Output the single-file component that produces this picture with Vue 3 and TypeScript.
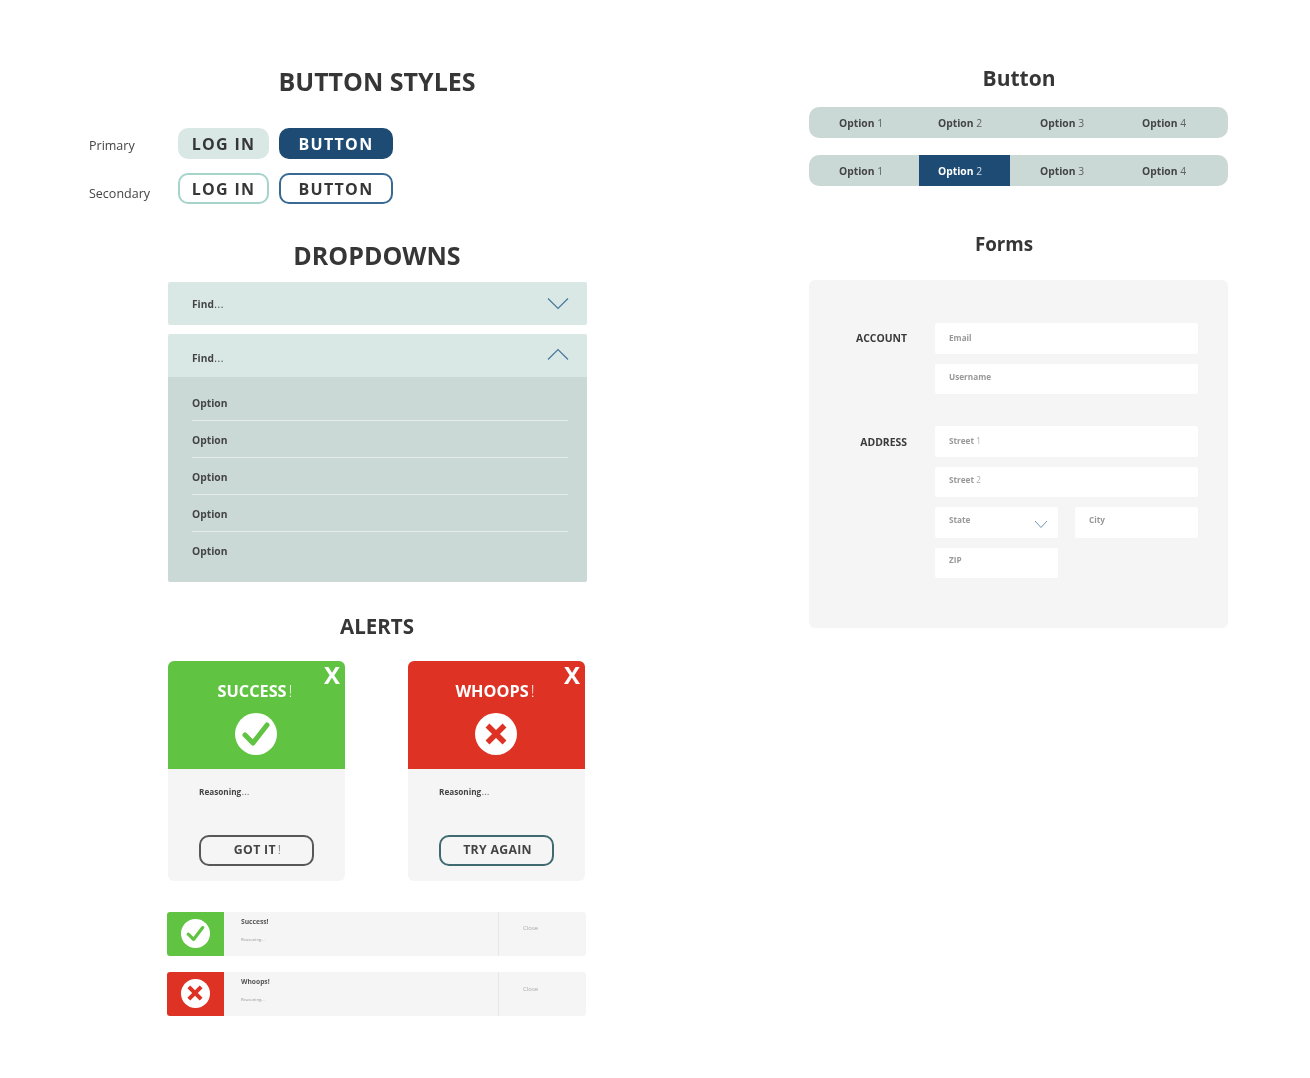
<script setup lang="ts">
const segOptions = ['1', '2', '3', '4']
const options = [1, 2, 3, 4, 5]
const alerts = [
  { kind: 'ok', title: 'SUCCESS', action: 'GOT IT', bang: true },
  { kind: 'bad', title: 'WHOOPS', action: 'TRY AGAIN', bang: false },
]
const toasts = [
  { kind: 'ok', title: 'Success!' },
  { kind: 'bad', title: 'Whoops!' },
]
</script>

<template>
  <div class="page">
    <div class="left">
      <h1 class="title-lg first">BUTTON STYLES</h1>
      <div class="btn-row primary">
        <span class="row-label">Primary</span>
        <button class="btn light">LOG IN</button>
        <button class="btn navy">BUTTON</button>
      </div>
      <div class="btn-row secondary">
        <span class="row-label">Secondary</span>
        <button class="btn light-outline">LOG IN</button>
        <button class="btn navy-outline">BUTTON</button>
      </div>

      <div class="column">
        <h1 class="title-lg dd-title">DROPDOWNS</h1>
        <div class="dd">
          <span>Find<span class="dots">...</span></span>
          <svg class="chev" width="22" height="13" viewBox="0 0 22 13"><path d="M1 1.5 11 11.5 21 1.5" /></svg>
        </div>
        <div class="dd open">
          <span>Find<span class="dots">...</span></span>
          <svg class="chev" width="22" height="13" viewBox="0 0 22 13"><path d="M1 11.5 11 1.5 21 11.5" /></svg>
        </div>
        <div class="dd-panel">
          <div v-for="o in options" :key="o" class="dd-option">Option</div>
        </div>

        <h2 class="title-md">ALERTS</h2>
        <div class="cards">
          <div v-for="a in alerts" :key="a.kind" class="card">
            <div class="card-head" :class="a.kind">
              <span class="card-x">X</span>
              <div class="card-title">{{ a.title }}<span class="bang">!</span></div>
              <div class="circle big" :class="a.kind">
                <svg v-if="a.kind === 'ok'" width="28" height="26" viewBox="0 0 28 26"><path d="M3 14 11 22 25 4" /></svg>
                <svg v-else width="22" height="22" viewBox="0 0 22 22"><path class="cross" d="M2.500 2.500 19.500 19.500M19.500 2.500 2.500 19.500" /></svg>
              </div>
            </div>
            <div class="card-body">
              <div class="reason">Reasoning<span class="dots">...</span></div>
              <button class="card-btn" :class="a.kind">{{ a.action }}<span v-if="a.bang" class="bang">!</span></button>
            </div>
          </div>
        </div>

        <div v-for="t in toasts" :key="t.kind" class="toast" :class="t.kind">
          <div class="toast-icon" :class="t.kind">
            <div class="circle small" :class="t.kind">
              <svg v-if="t.kind === 'ok'" width="19" height="17" viewBox="0 0 28 26"><path d="M3 14 11 22 25 4" /></svg>
              <svg v-else width="16" height="16" viewBox="0 0 22 22"><path class="cross" d="M2.500 2.500 19.500 19.500M19.500 2.500 2.500 19.500" /></svg>
            </div>
          </div>
          <div class="toast-text">
            <div class="toast-title">{{ t.title }}</div>
            <div class="toast-reason">Reasoning...</div>
          </div>
          <div class="toast-close">Close</div>
        </div>
      </div>
    </div>

    <div class="right">
      <h2 class="title-md btn-title">Button</h2>
      <div class="seg">
        <div v-for="(n, i) in segOptions" :key="n" class="seg-item" :class="'s' + i">Option <span class="thin">{{ n }}</span></div>
      </div>
      <div class="seg second">
        <div v-for="(n, i) in segOptions" :key="n" class="seg-item" :class="['s' + i, { active: i === 1 }]">Option <span class="thin">{{ n }}</span></div>
      </div>

      <h2 class="title-sm">Forms</h2>
      <div class="form">
        <div class="form-group">
          <div class="form-label">ACCOUNT</div>
          <div class="fields">
            <div class="field">Email</div>
            <div class="field tight">Username</div>
          </div>
        </div>
        <div class="form-group">
          <div class="form-label addr">ADDRESS</div>
          <div class="fields">
            <div class="field">Street <span class="thin">1</span></div>
            <div class="field tight">Street <span class="thin">2</span></div>
            <div class="half-row">
              <div class="field tight half">
                State
                <svg class="field-chev" width="14" height="9" viewBox="0 0 14 9"><path d="M1 1 7 7.500 13 1" /></svg>
              </div>
              <div class="field tight half">City</div>
              <div class="field tighter half">ZIP</div>
            </div>
          </div>
        </div>
      </div>
    </div>
  </div>
</template>

<style scoped>
.page {
  display: flex;
  width: 1310px;
  height: 1078px;
  background: #fff;
  font-family: "Open Sans", "Noto Sans", sans-serif;
  color: #3a3a3a;
  overflow: hidden;
  filter: blur(0.3px);
}
h1, h2 { margin: 0; }
.thin { font-weight: 400; opacity: .8; }
.dots { font-weight: 400; letter-spacing: .5px; margin-left: .5px; }
.bang { font-weight: 300; margin-left: 2px; }
button { font-family: inherit; padding: 0; cursor: pointer; box-sizing: border-box; }

.left { width: 809px; flex: none; padding: 65px 0 0 89px; box-sizing: border-box; }
.title-lg { font-size: 25px; line-height: 32px; font-weight: 700; color: #363636; text-align: center; width: 420px; margin-left: 78px; }
.column { margin-left: 78px; width: 420px; }
.column .title-lg { margin-left: 0; }

.btn-row { display: flex; height: 31px; margin-top: 31px; }
.btn-row.secondary { margin-top: 14px; }
.row-label { width: 89px; font-size: 12.500px; line-height: 20px; color: #444; padding-top: 8px; }
.secondary .row-label { padding-top: 11px; }
.btn { height: 31px; border-radius: 10px; font-size: 16px; font-weight: 700; letter-spacing: 1.300px; color: #363636; border: 0; background: none; }
.btn + .btn { margin-left: 10px; width: 114px; }
.row-label + .btn { width: 91px; }
.light { background: #dae8e5; }
.navy { background: #1d4b73; color: #fff; }
.light-outline { border: 2px solid #a6d4cb; }
.navy-outline { border: 2px solid #386a93; }

.dd-title { margin-top: 35px; }
.dd { display: flex; align-items: center; justify-content: space-between; height: 43px; background: #dae8e5; border-radius: 2px; margin: 11px 0 0 1px; padding: 1px 18px 0 24px; box-sizing: border-box; font-size: 10.200px; font-weight: 700; color: #444; }
.dd.open { margin-top: 9px; border-radius: 2px 2px 0 0; padding-top: 5px; }
.chev { fill: none; stroke: #45779a; stroke-width: 1.200; margin-top: -2px; }
.dd.open .chev { margin-top: -8px; }
.dd-panel { height: 205px; margin-left: 1px; background: #cbd9d6; border-radius: 0 0 2px 2px; padding: 7px 19px 0 24px; box-sizing: border-box; }
.dd-option { height: 37px; box-sizing: border-box; padding-top: 12px; font-size: 10.300px; line-height: 14px; font-weight: 700; color: #444; border-bottom: 1px solid #e4ecea; }
.dd-option:last-child { border-bottom: 0; }

.title-md { font-size: 20.500px; line-height: 28px; font-weight: 700; color: #363636; text-align: center; }
.btn-title { font-size: 21px; padding-left: 1px; }
.column .title-md { margin-top: 30px; }

.cards { display: flex; gap: 63px; margin-top: 21px; padding-left: 1px; }
.card { width: 177px; height: 220px; background: #f5f5f5; border-radius: 6px; }
.card-head { position: relative; height: 108px; color: #fff; text-align: center; box-sizing: border-box; padding: 18px 1px 0 0; border-radius: 6px 6px 0 0; }
.card-head.ok { background: #60c341; }
.card-head.bad { background: #dd3224; }
.card-x { position: absolute; top: 2px; right: 5px; font-size: 24px; line-height: 24px; font-weight: 700; }
.card-title { font-size: 16.300px; line-height: 24px; font-weight: 700; letter-spacing: 0; padding-right: 2px; }
.circle { border-radius: 50%; background: #fff; display: flex; align-items: center; justify-content: center; }
.circle.big { width: 42px; height: 42px; margin: 10px auto 0; }
.circle.small { width: 29px; height: 29px; }
.circle path { fill: none; stroke-width: 5; stroke-linecap: round; stroke-linejoin: round; }
.circle path.cross { stroke-linecap: butt; stroke-width: 5.500; }
.circle.ok path { stroke: #60c341; }
.circle.bad path { stroke: #dd3224; }
.card-body { padding: 16px 0 0 31px; }
.reason { font-size: 8.200px; line-height: 14px; font-weight: 700; color: #444; }
.card-btn { display: block; width: 115px; height: 31px; margin-top: 36px; border-radius: 10px; background: none; font-size: 12.300px; font-weight: 700; letter-spacing: .3px; color: #444; padding: 0 0 2px 2px; }
.card-btn.ok { border: 2px solid #585858; }
.card-btn.bad { border: 2px solid #3f6a70; }

.toast { display: flex; width: 419px; height: 44px; background: #f5f5f5; border-radius: 3px; overflow: hidden; margin-top: 16px; }
.cards + .toast { margin-top: 31px; }
.toast-icon { width: 57px; display: flex; align-items: center; justify-content: center; box-sizing: border-box; padding: 0 1px 2px 0; }
.toast-icon.ok { background: #60c341; }
.toast-icon.bad { background: #dd3224; }
.toast-text { width: 275px; box-sizing: border-box; padding: 5px 0 0 17px; border-right: 1px solid #e6e6e6; flex: none; }
.toast-title { font-size: 6.700px; line-height: 10px; font-weight: 700; color: #555; }
.toast-reason { font-size: 4.200px; line-height: 8px; color: #999; margin-top: 9px; }
.toast-close { font-size: 6px; line-height: 10px; color: #aaa; padding: 11px 0 0 24px; }
.toast.bad .toast-close { padding-top: 12px; }

.right { width: 419px; flex: none; padding-top: 64px; }
.seg { display: grid; grid-template-columns: 110px 91px 102px 116px; height: 31px; background: #cbd9d6; border-radius: 10px; overflow: hidden; margin-top: 15px; }
.seg.second { margin-top: 17px; }
.seg-item { font-size: 10.300px; line-height: 33px; font-weight: 700; color: #444; padding-left: 30px; }
.seg-item.s1 { padding-left: 19px; }
.seg-item.active { background: #1d4b73; color: #fff; }

.title-sm { font-size: 18.800px; line-height: 26px; font-weight: 700; color: #363636; text-align: center; width: 390px; margin-top: 45px; }
.form { height: 348px; background: #f5f5f5; border-radius: 6px; margin-top: 23px; padding-top: 43px; box-sizing: border-box; }
.form-group { display: flex; }
.form-group + .form-group { margin-top: 32px; }
.form-label { width: 98px; margin-right: 28px; text-align: right; font-size: 10.400px; line-height: 14px; font-weight: 700; color: #3a3a3a; padding-top: 8px; }
.form-label.addr { padding-top: 9px; }
.fields { width: 263px; display: flex; flex-direction: column; gap: 10px; }
.field { position: relative; height: 30.500px; background: #fff; border-radius: 2px; box-sizing: border-box; padding: 8px 0 0 14px; font-size: 8.200px; line-height: 14px; font-weight: 700; color: #989898; }
.field.tight { padding-top: 6px; }
.field.tighter { padding-top: 5px; }
.half-row { display: grid; grid-template-columns: 123px 123px; column-gap: 17px; row-gap: 10px; }
.field-chev { position: absolute; right: 10px; top: 13px; fill: none; stroke: #6f97b5; stroke-width: 1; }
</style>
